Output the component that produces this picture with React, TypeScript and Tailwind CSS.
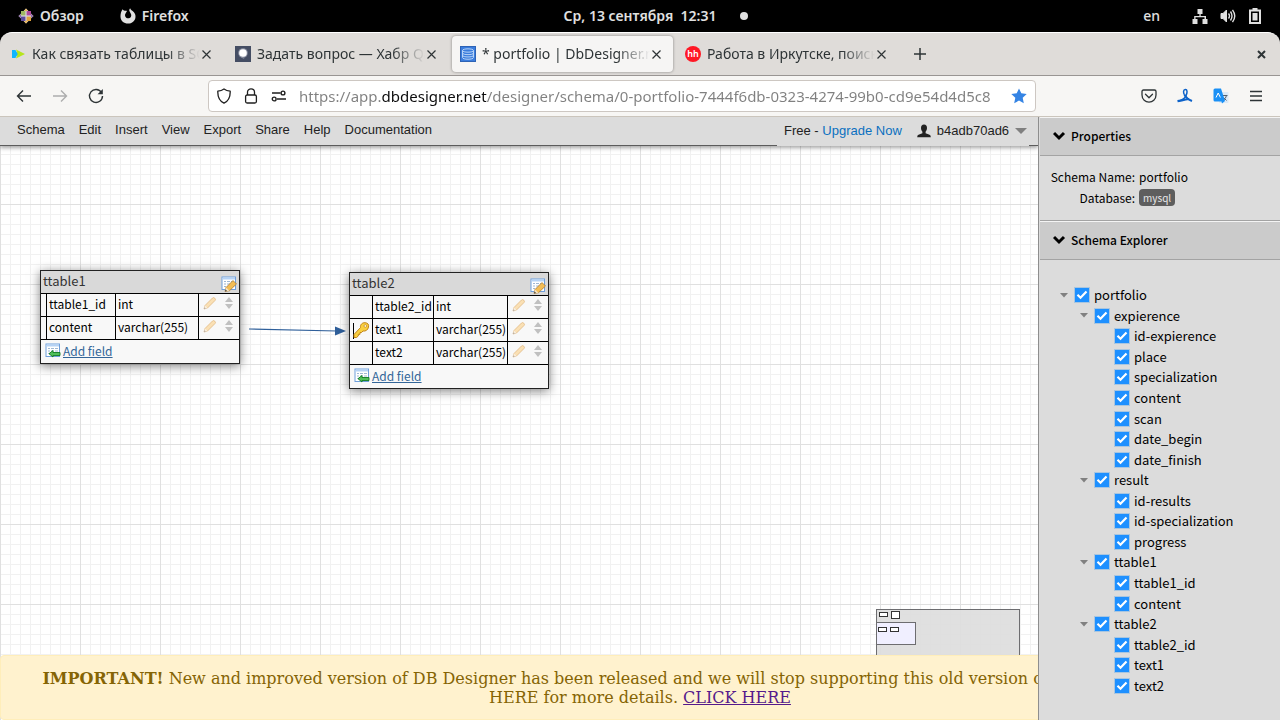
import type { ReactNode } from 'react';

interface Field {
  name: string;
  type: string;
  isKey?: boolean;
}

interface TreeItem {
  label: string;
  depth: number;
}

const MENU = ['Schema', 'Edit', 'Insert', 'View', 'Export', 'Share', 'Help', 'Documentation'];

const TREE: TreeItem[] = [
  { label: 'portfolio', depth: 0 },
  { label: 'expierence', depth: 1 },
  { label: 'id-expierence', depth: 2 },
  { label: 'place', depth: 2 },
  { label: 'specialization', depth: 2 },
  { label: 'content', depth: 2 },
  { label: 'scan', depth: 2 },
  { label: 'date_begin', depth: 2 },
  { label: 'date_finish', depth: 2 },
  { label: 'result', depth: 1 },
  { label: 'id-results', depth: 2 },
  { label: 'id-specialization', depth: 2 },
  { label: 'progress', depth: 2 },
  { label: 'ttable1', depth: 1 },
  { label: 'ttable1_id', depth: 2 },
  { label: 'content', depth: 2 },
  { label: 'ttable2', depth: 1 },
  { label: 'ttable2_id', depth: 2 },
  { label: 'text1', depth: 2 },
  { label: 'text2', depth: 2 },
];

const App: React.FC = () => (
  <div className="min-h-screen flex flex-col bg-black font-['Noto_Sans',sans-serif]">
    <SystemBar />
    <TabStrip />
    <AddressBar />
    <div className="relative flex flex-1 overflow-hidden bg-white">
      <main className="flex flex-1 flex-col min-w-0">
        <MenuBar />
        <Canvas />
      </main>
      <Notice />
      <Sidebar />
    </div>
  </div>
);

const SystemBar: React.FC = () => (
  <header className="grid grid-cols-[1fr_auto_1fr] items-center h-8 px-[18px] text-sm font-semibold text-[#e0e0e0]">
    <div className="flex items-center gap-9">
      <button className="flex items-center gap-1.5">
        <svg width="16" height="16" viewBox="0 0 16 16">
          <path d="M8 0.5L10.5 3H13V5.500L15.500 8L13 10.500V13H10.500L8 15.500L5.500 13H3V10.500L0.500 8L3 5.500V3H5.500Z" fill="#d8d4d8" />
          <path d="M3 3H7.400V7.400H3Z" fill="#9fb860" />
          <path d="M8.600 3H13V7.400H8.600Z" fill="#b0489c" />
          <path d="M3 8.600H7.400V13H3Z" fill="#5c4a9c" />
          <path d="M8.600 8.600H13V13H8.600Z" fill="#e0a23c" />
          <path d="M8 0.500L10 3H6ZM8 15.500L6 13H10Z" fill="#e9b75b" />
          <path d="M0.500 8L3 6V10ZM15.500 8L13 10V6Z" fill="#8d6ba8" />
        </svg>
        Обзор
      </button>
      <button className="flex items-center gap-1.5">
        <svg width="16" height="16" viewBox="0 0 16 16">
          <path d="M2.600 1.200C3 2 3.700 2.600 4.600 2.800C5.400 2.500 6.400 2.600 7 3L5.700 5.200C5 6 4.800 7.200 5.300 8.400C6 10 8 10.800 9.700 10C11.400 9 11.700 7 10.700 5.400C10.200 4.500 9.500 3.800 9.300 2.800C9.200 1.800 9.600 0.900 10.200 0.300C10.300 1.400 11.200 2 12.300 2.800C14.400 4.300 15.700 6.300 15.500 8.900C15.200 12.700 12 15.600 8 15.600C3.900 15.600 0.600 12.600 0.500 8.700C0.500 6 1 3.200 2.600 1.200Z" fill="#e0e0e0" />
        </svg>
        Firefox
      </button>
    </div>
    <div className="flex items-center gap-6 pl-8">
      <span className="whitespace-pre">Ср, 13 сентября  12:31</span>
      <span className="size-2 rounded-full bg-[#e0e0e0]" />
    </div>
    <div className="flex items-center justify-end gap-3">
      <span className="pr-5 font-medium">en</span>
      <svg width="16" height="16" viewBox="0 0 16 16" fill="#e0e0e0">
        <path d="M5.500 1H10.500V6H8.700V8H14V11H15.500V16H10.500V11H12.500V9.300H3.500V11H5.500V16H0.500V11H2.200V8H7.400V6H5.500Z" />
      </svg>
      <svg width="16" height="16" viewBox="0 0 16 16" fill="none" stroke="#e0e0e0">
        <path d="M1 5.500H3L6.500 2V14L3 10.500H1Z" fill="#e0e0e0" />
        <path d="M8.500 5.500Q10.500 8 8.500 10.500M10.500 3.500Q13.500 8 10.500 12.500M12.500 1.800Q17 8 12.500 14.200" strokeWidth="1.400" />
      </svg>
      <svg width="14" height="16" viewBox="0 0 14 16">
        <path d="M2 2.500H12V15H2Z" fill="none" stroke="#e0e0e0" strokeWidth="2" />
        <path d="M4.500 0H9.500V2H4.500ZM4.500 5H9.500V12.500H4.500Z" fill="#e0e0e0" />
      </svg>
    </div>
  </header>
);

const TabStrip: React.FC = () => (
  <nav className="flex items-center h-11 pl-0.5 pr-3.5 rounded-t-xl border-t border-t-white border-b border-b-[#999593] bg-[#dfdcd9] text-[#2e3436]">
    <div className="flex gap-1">
      <Tab
        title="Как связать таблицы в SQL"
        icon={
          <>
            <path d="M2 4L10 8L2 12Z" fill="#14b4f4" />
            <path d="M6 3.500L15 8L6 12.500L7.500 8Z" fill="#b6e51c" />
            <path d="M2 4H5.500L7.500 8L5.500 12H2Z" fill="#0fb6ff" />
          </>
        }
      />
      <Tab
        title="Задать вопрос — Хабр Q&A"
        icon={
          <>
            <rect width="16" height="16" fill="#444d63" />
            <circle cx="8" cy="7" r="4.800" fill="#8c91a3" />
            <circle cx="8" cy="7" r="3.800" fill="#fff" />
            <path d="M5.500 10.500L8.500 11.500L9.500 13L7 12Z" fill="#8c91a3" />
          </>
        }
      />
      <Tab
        active
        title="* portfolio | DbDesigner.net"
        icon={
          <>
            <rect x="0.500" y="0.500" width="15" height="15" fill="#3b7ddd" stroke="#2e63b5" />
            <path d="M2.500 4.500C2.500 2.300 13.500 2.300 13.500 4.500S2.500 6.700 2.500 4.500V11.500C2.500 13.800 13.500 13.800 13.500 11.500V4.500M2.500 7C2.500 9.200 13.500 9.200 13.500 7M2.500 9.300C2.500 11.500 13.500 11.500 13.500 9.300" fill="none" stroke="#b9d4f7" />
          </>
        }
      />
      <Tab
        title="Работа в Иркутске, поиск персонала"
        icon={
          <>
            <circle cx="8" cy="8" r="8" fill="#ff1825" />
            <text x="8" y="11" textAnchor="middle" fontSize="9" fontWeight="600" fill="#fff">hh</text>
          </>
        }
      />
    </div>
    <button aria-label="New tab" className="ml-[15px]">
      <svg width="14" height="14" viewBox="0 0 14 14" stroke="#2e3436" strokeWidth="1.500">
        <path d="M7 1V13M1 7H13" />
      </svg>
    </button>
    <button aria-label="Close window" className="ml-auto">
      <svg width="9" height="9" viewBox="0 0 9 9" stroke="#2e3436" strokeWidth="2">
        <path d="M1 1L8 8M8 1L1 8" />
      </svg>
    </button>
  </nav>
);

const Tab: React.FC<{ title: string; icon: ReactNode; active?: boolean }> = ({ title, icon, active }) => (
  <div
    className={`flex items-center w-[221px] h-9 pl-2 pr-3 rounded ${
      active ? 'bg-[#f6f5f4] shadow-[0_0_3px_rgba(0,0,0,0.4)]' : ''
    }`}
  >
    <svg width="16" height="16" viewBox="0 0 16 16" className="shrink-0 mr-1.5">
      {icon}
    </svg>
    <span className="flex-1 overflow-hidden whitespace-nowrap text-sm mask-r-from-80%">{title}</span>
    <button aria-label="Close tab" className="ml-0.5">
      <svg width="9" height="9" viewBox="0 0 9 9" stroke="#2e3436" strokeWidth="1.200">
        <path d="M0.500 0.500L8.500 8.500M8.500 0.500L0.500 8.500" />
      </svg>
    </button>
  </div>
);

const AddressBar: React.FC = () => (
  <div className="flex items-center h-[41px] pl-4 pr-[17px] border-b border-[#cbc5bc] bg-[#f7f6f4]">
    <div className="flex items-center gap-5 w-48">
      <button aria-label="Back">
        <svg width="16" height="16" viewBox="0 0 16 16" fill="none" stroke="#2e3436" strokeWidth="1.400">
          <path d="M15 8H1.500M7 2.500L1.500 8L7 13.500" />
        </svg>
      </button>
      <button aria-label="Forward" disabled>
        <svg width="16" height="16" viewBox="0 0 16 16" fill="none" stroke="#adadad" strokeWidth="1.400">
          <path d="M1 8H14.500M9 2.500L14.500 8L9 13.500" />
        </svg>
      </button>
      <button aria-label="Reload">
        <svg width="16" height="16" viewBox="0 0 16 16" fill="none" stroke="#2e3436" strokeWidth="1.400">
          <path d="M13.500 4.500A6.500 6.500 0 1 0 14.500 8" />
          <path d="M14.800 1V6.200H9.600Z" fill="#2e3436" stroke="none" />
        </svg>
      </button>
    </div>
    <div className="flex flex-1 items-center gap-3 h-8 px-2 rounded border border-[#cdc7c2] bg-white">
      <svg width="14" height="16" viewBox="0 0 14 16" fill="none" stroke="#1f1f1f" strokeWidth="1.300">
        <path d="M7 1C5 2.500 3 3 0.800 3.200C0.600 9 2.500 13 7 15.200C11.500 13 13.400 9 13.200 3.200C11 3 9 2.500 7 1Z" strokeLinejoin="round" />
      </svg>
      <svg width="16" height="16" viewBox="0 0 16 16" fill="none" stroke="#1f1f1f" strokeWidth="1.300">
        <rect x="2.600" y="7" width="10.800" height="8" rx="1.500" />
        <path d="M4.500 7V4C4.500 -0.200 11.500 -0.200 11.500 4V7" />
      </svg>
      <svg width="16" height="16" viewBox="0 0 16 16" fill="none" stroke="#1f1f1f" strokeWidth="1.400">
        <path d="M1 5H9.500M6 11H15" />
        <circle cx="12" cy="5" r="1.900" />
        <circle cx="3.200" cy="11" r="1.900" />
      </svg>
      <input
        aria-label="Address"
        defaultValue="https://app.dbdesigner.net/designer/schema/0-portfolio-7444f6db-0323-4274-99b0-cd9e54d4d5c8"
        className="flex-1 min-w-0 text-[15px] outline-none text-transparent bg-clip-text bg-[linear-gradient(90deg,#808080_83px,#0c0c0d_83px,#0c0c0d_188px,#808080_188px)]"
      />
      <button aria-label="Bookmark">
        <svg width="16" height="16" viewBox="0 0 16 16" fill="#3584e4">
          <path d="M8 0.500L10.300 5.300L15.700 6L11.700 9.700L12.800 15.200L8 12.600L3.200 15.200L4.300 9.700L0.300 6L5.700 5.300Z" />
        </svg>
      </button>
    </div>
    <div className="flex items-center gap-5 ml-[105px]">
      <button aria-label="Pocket">
        <svg width="16" height="16" viewBox="0 0 16 16" fill="none" stroke="#2e3436" strokeWidth="1.300" strokeLinejoin="round">
          <path d="M2.500 2H13.500Q15 2 15 3.500V7C15 16.500 1 16.500 1 7V3.500Q1 2 2.500 2Z" />
          <path d="M4.500 6.300L8 9.700L11.500 6.300" strokeLinecap="round" />
        </svg>
      </button>
      <button aria-label="Acrobat">
        <svg width="16" height="16" viewBox="0 0 16 16" fill="none" stroke="#0d62c9">
          <path d="M7.500 6.800C6 4.500 6.300 1.700 8.300 1.500C10.500 1.400 10.300 4.500 9.300 7C8.300 9.800 6 11.500 3.500 12.500" strokeWidth="1.500" />
          <path d="M7.500 6.800C8.800 9.200 11 11.500 15 13" strokeWidth="2" />
          <path d="M0.500 13.200C4 12.600 7.500 11.600 12 11" strokeWidth="2.200" />
        </svg>
      </button>
      <button aria-label="Translate">
        <svg width="16" height="16" viewBox="0 0 16 16">
          <rect x="6" y="4" width="9.500" height="11" rx="1" fill="#dde9f5" />
          <path d="M9.500 7.500H14.500M13.500 7.500Q13 10.500 10 12.500M10.500 9.500L13.500 12.500" fill="none" stroke="#56606b" />
          <path d="M2 0.500H8L12 13L9 15.500L8.500 13.500H2Q0.500 13.500 0.500 12V2Q0.500 0.500 2 0.500Z" fill="#1a90f5" />
          <path d="M3 9.500L5.200 5L7.400 9.500" fill="none" stroke="#fff" />
        </svg>
      </button>
      <button aria-label="Menu">
        <svg width="14" height="16" viewBox="0 0 14 16" stroke="#2e3436" strokeWidth="1.400">
          <path d="M1 3.500H13M1 8H13M1 12.500H13" />
        </svg>
      </button>
    </div>
  </div>
);

const MenuBar: React.FC = () => (
  <div className="relative z-10 flex justify-between h-[29px] pr-[9px] border-b border-[#5c5c5c] bg-[#dcdcdc] shadow-[0_2px_4px_rgba(0,0,0,0.35)] font-['Liberation_Sans',sans-serif] text-[13px] text-[#222]">
    <div className="flex gap-3.5 pl-[17px] pb-[3px]">
      {MENU.map((item) => (
        <button key={item}>{item}</button>
      ))}
    </div>
    <div className="flex items-center w-[252px] h-[29px] pl-[7px] pb-0.5 bg-[#dcdcdc]">
      <span className="whitespace-pre">Free - </span>
      <a href="#upgrade" className="text-[#0a70c0]">Upgrade Now</a>
      <button className="flex items-center ml-[15px]">
        <svg width="14" height="14" viewBox="0 0 14 14" fill="#222" className="mr-1.5">
          <path d="M7 0.500C9 0.500 10 2 10 4C10 5.800 9.200 7 8.600 7.700V9.300L12.500 10.800Q13.800 11.300 13.800 13.200H0.200Q0.200 11.300 1.500 10.800L5.400 9.300V7.700C4.800 7 4 5.800 4 4C4 2 5 0.500 7 0.500Z" />
        </svg>
        b4adb70ad6
        <svg width="12" height="6" viewBox="0 0 12 6" fill="#808080" className="ml-1.5">
          <path d="M0 0H12L6 6Z" />
        </svg>
      </button>
    </div>
  </div>
);

// 10px grid with a darker line every 80px
const Canvas: React.FC = () => (
  <div className="relative flex-1 overflow-hidden bg-white bg-[linear-gradient(to_right,#e0e0e0_1px,transparent_1px),linear-gradient(to_bottom,#e0e0e0_1px,transparent_1px),linear-gradient(to_right,#f1f1f1_1px,transparent_1px),linear-gradient(to_bottom,#f1f1f1_1px,transparent_1px)] bg-size-[80px_80px,80px_80px,10px_10px,10px_10px] bg-position-[0_58px]">
    <svg width="97" height="12" viewBox="0 0 97 12" className="absolute left-[249px] top-[179px]">
      <path d="M0 4L88 6" stroke="#2f5f9a" strokeWidth="1.200" />
      <path d="M86 1.500L97 6L86 10.500Z" fill="#2f5f9a" />
    </svg>
    <div className="absolute left-10 top-[124px]">
      <TableNode
        name="ttable1"
        columns={['w-[5px]', 'w-[69px]', 'w-[83px]', 'w-[41px]']}
        fields={[
          { name: 'ttable1_id', type: 'int' },
          { name: 'content', type: 'varchar(255)' },
        ]}
      />
    </div>
    <div className="absolute left-[349px] top-[126px]">
      <TableNode
        name="ttable2"
        columns={['w-[22px]', 'w-[61px]', 'w-[74px]', 'w-[41px]']}
        fields={[
          { name: 'ttable2_id', type: 'int' },
          { name: 'text1', type: 'varchar(255)', isKey: true },
          { name: 'text2', type: 'varchar(255)' },
        ]}
      />
    </div>
    {/* Minimap */}
    <svg width="144" height="111" viewBox="0 0 144 111" className="absolute right-[18px] bottom-0" stroke="#6d6d70">
      <rect x="0.500" y="0.500" width="143" height="120" fill="#dedede" fillOpacity="0.930" />
      <rect x="0.500" y="13.500" width="39" height="22" fill="#f0efff" />
      <g fill="#fff" stroke="#333">
        <rect x="3.500" y="3.500" width="8" height="4" />
        <rect x="15.500" y="2.500" width="8" height="7" />
        <rect x="2.500" y="18.500" width="8" height="4" />
        <rect x="14.500" y="18.500" width="8" height="4" />
      </g>
    </svg>
  </div>
);

const TableNode: React.FC<{ name: string; columns: string[]; fields: Field[] }> = ({ name, columns, fields }) => (
  <div className="w-[200px] border border-[#222] bg-[#f8f8f8] shadow-[0_2px_10px_rgba(0,0,0,0.5)] font-['Noto_Sans_CJK_SC',sans-serif] text-xs text-black">
    <div className="flex justify-between h-[22px] pl-0.5 pr-0.5 bg-[#d9d9d9] text-[13px] leading-5 text-[#333]">
      {name}
      <button aria-label={`Edit ${name}`} className="self-end mb-px">
        <svg width="16" height="16" viewBox="0 0 16 16">
          <SheetIcon />
          <path d="M4 15.500L5 11.500L12 4.500L15.500 8L8.500 14.700Z" fill="#f3bd55" stroke="#a8742a" strokeWidth="0.700" />
          <path d="M4 15.500L5 11.500L8.500 14.700Z" fill="#f6e3c0" />
          <path d="M4 15.500L4.600 13.600L6 14.900Z" fill="#333" />
        </svg>
      </button>
    </div>
    <table className="w-full table-fixed border-separate border-spacing-0">
      <colgroup>
        {columns.map((width) => (
          <col key={width} className={width} />
        ))}
      </colgroup>
      <tbody>
        {fields.map((field) => (
          <tr key={field.name} className="h-[23px]">
            <td className="p-0 border-t border-black">{field.isKey && <KeyIcon />}</td>
            <td className="p-0 pl-0.5 pb-0.5 border-t border-l border-black leading-5 whitespace-nowrap">{field.name}</td>
            <td className="p-0 pl-0.5 pb-0.5 border-t border-l border-black leading-5 whitespace-nowrap">{field.type}</td>
            <td className="p-0 border-t border-l border-black">
              <div className="flex items-center gap-2 pl-1 pb-1">
                <svg width="14" height="14" viewBox="0 0 14 14">
                  <path d="M1 13L2 9.500L9.500 2Q10.500 1 11.800 2.200T12 4.500L4.500 12Z" fill="#fae0b4" stroke="#dfb882" strokeWidth="0.800" />
                  <path d="M1 13L2 9.500L4.500 12Z" fill="#f9efe0" />
                  <path d="M1 13L1.500 11.300L2.800 12.500Z" fill="#a9a29a" />
                </svg>
                <svg width="8" height="12" viewBox="0 0 8 12" fill="#c0c0c0">
                  <path d="M4 0L8 5H0ZM4 12L0 7H8Z" />
                </svg>
              </div>
            </td>
          </tr>
        ))}
      </tbody>
    </table>
    <div className="flex items-center gap-0.5 h-6 pl-1 pb-0.5 border-t border-black">
      <svg width="16" height="16" viewBox="0 0 16 16">
        <SheetIcon />
        <path d="M4 10.700L8 7.500V9.500H15V12.500H8V14Z" fill="#4fbf5a" stroke="#0f7a20" strokeWidth="0.900" />
      </svg>
      <a href="#add-field" className="text-[#336699] underline">Add field</a>
    </div>
  </div>
);

const SheetIcon: React.FC = () => (
  <>
    <rect x="1" y="1" width="13.500" height="12.500" fill="#fff" stroke="#6f9fdb" />
    <path d="M1.500 2.500H14" stroke="#b5d2f5" strokeWidth="2" />
    <path d="M3 5.500H5M6 5.500H9M10 5.500H13M3 8H5M6 8H9M10 8H13M3 10.500H5M6 10.500H9M10 10.500H13" stroke="#9fb8d4" />
  </>
);

const KeyIcon: React.FC = () => (
  <svg width="20" height="18" viewBox="0 0 20 18" className="block ml-0.5">
    <path d="M1.500 2V18" stroke="#000" />
    <path d="M8.500 6.500C8 3.500 10.500 1.500 13 1.700C16 2 17 3.500 16.500 6C16 9 13.500 10.500 11 10L9.500 11.500H8V13.300H6.300V15L4.500 16.500H2V13.500Z" fill="#f9cf3f" stroke="#c1841a" />
    <circle cx="13.300" cy="5" r="1.300" fill="#fff" stroke="#c1841a" strokeWidth="0.700" />
  </svg>
);

const Sidebar: React.FC = () => (
  <aside className="relative z-20 w-[242px] pl-px border-l border-[#8e8e8e] bg-[#dcdcdc] font-['Noto_Sans_CJK_SC',sans-serif] text-xs text-black">
    <PanelHeader title="Properties" />
    <dl className="grid grid-cols-[95px_1fr] gap-x-1 pt-2.5 pb-3 leading-[21px] border-b border-[#a3a3a3]">
      <dt className="text-right">Schema Name:</dt>
      <dd>portfolio</dd>
      <dt className="text-right">Database:</dt>
      <dd className="flex items-center">
        <span className="h-[17px] px-1 rounded bg-[#5e5e5e] text-[10px] leading-[17px] text-[#e8e8e8]">mysql</span>
      </dd>
    </dl>
    <PanelHeader title="Schema Explorer" />
    <ul className="grid auto-rows-fr h-[411px] mt-[25px] text-[13px]">
      {TREE.map((item, idx) => (
        <TreeRow key={idx} item={item} />
      ))}
    </ul>
  </aside>
);

const PanelHeader: React.FC<{ title: string }> = ({ title }) => (
  <h2 className="flex items-center gap-1 h-[39px] pl-[13px] pb-0.5 border-t border-t-[#f4f4f4] border-b border-b-[#a3a3a3] bg-[#cbcbcb] font-medium">
    <svg width="14" height="10" viewBox="0 0 14 10" fill="none" stroke="#000" strokeWidth="3">
      <path d="M1 2L6 7L11 2" />
    </svg>
    {title}
  </h2>
);

const TreeRow: React.FC<{ item: TreeItem }> = ({ item }) => {
  const getIndent = (depth: number) => {
    switch (depth) {
      case 0:
        return 'pl-5';
      case 1:
        return 'pl-10';
      default:
        return 'pl-[74px]';
    }
  };

  return (
    <li className={`flex items-center ${getIndent(item.depth)}`}>
      {item.depth < 2 && (
        <svg width="8" height="5" viewBox="0 0 8 5" fill="#808080" className="mr-1.5">
          <path d="M0 0H8L4 4.500Z" />
        </svg>
      )}
      <label className="flex items-center gap-1 leading-5">
        <span className="relative size-4">
          <input type="checkbox" defaultChecked className="peer block size-4 appearance-none border border-[#a9c6e0] bg-white checked:bg-[#1e90ff]" />
          <svg
            viewBox="0 0 16 16"
            fill="none"
            stroke="#fff"
            strokeWidth="2.200"
            className="absolute inset-0 hidden pointer-events-none peer-checked:block"
          >
            <path d="M3.500 7.800L6.500 10.700L12.500 4.500" />
          </svg>
        </span>
        {item.label}
      </label>
    </li>
  );
};

const Notice: React.FC = () => (
  <div
    role="alert"
    className="absolute inset-x-0 bottom-0 z-10 px-5 pt-[13px] pb-3 rounded border border-[#ffeeba] bg-[#fff2ce] text-center font-['DejaVu_Serif',serif] text-base leading-[19px] text-[#856404]"
  >
    <strong>IMPORTANT!</strong> New and improved version of DB Designer has been released and we will stop supporting this
    old version of the editor. Please click HERE for more details.{' '}
    <a href="#details" className="text-[#551a8b] underline">CLICK HERE</a>
  </div>
);

export default App;
